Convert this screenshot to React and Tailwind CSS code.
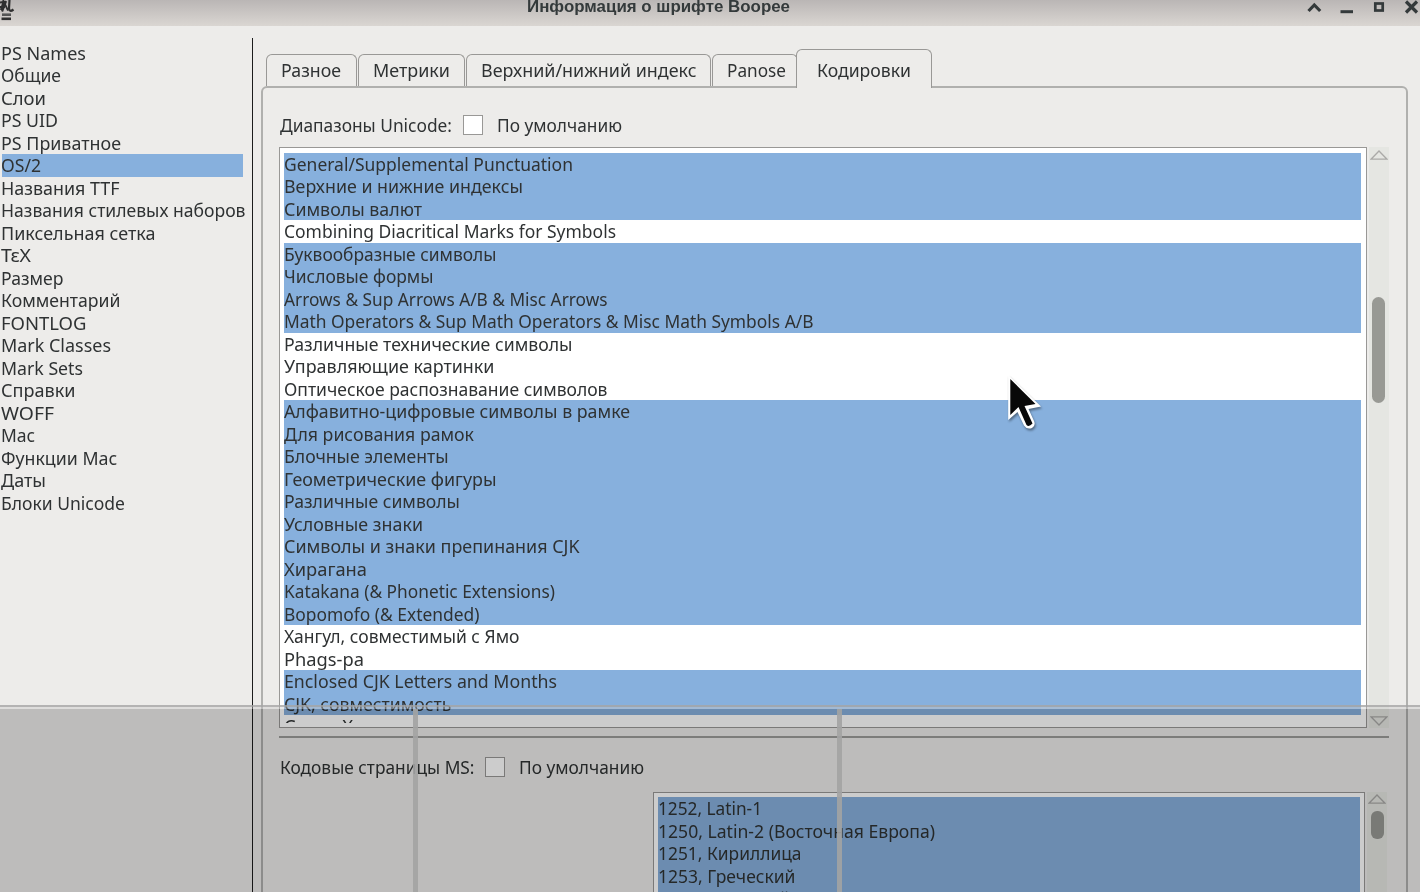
import { useLayoutEffect, useRef } from "react";

// Text run condensed or stretched to an exact advance width.
function Fit({ w, children, className = "" }) {
  const ref = useRef(null);
  useLayoutEffect(() => {
    const el = ref.current;
    const apply = () => {
      el.style.transform = "none";
      const natural = el.getBoundingClientRect().width;
      if (w && natural) el.style.transform = `scaleX(${w / natural})`;
    };
    apply();
    document.fonts?.ready.then(apply);
  }, [w]);
  return (
    <span ref={ref} className={`inline-block origin-left whitespace-nowrap ${className}`}>
      {children}
    </span>
  );
}

const sections = [
  ["PS Names", 85], ["Общие", 60], ["Слои", 45], ["PS UID", 57], ["PS Приватное", 120],
  ["OS/2", 40], ["Названия TTF", 118.5], ["Названия стилевых наборов", 244.5],
  ["Пиксельная сетка", 154.5], ["ΤεΧ", 30], ["Размер", 62.5], ["Комментарий", 119.5],
  ["FONTLOG", 85.5], ["Mark Classes", 110], ["Mark Sets", 82], ["Справки", 74.5],
  ["WOFF", 53], ["Mac", 34], ["Функции Mac", 116], ["Даты", 45], ["Блоки Unicode", 124],
];

const ranges = [
  ["General/Supplemental Punctuation", 289, 1],
  ["Верхние и нижние индексы", 239, 1],
  ["Символы валют", 138, 1],
  ["Combining Diacritical Marks for Symbols", 332, 0],
  ["Буквообразные символы", 212.5, 1],
  ["Числовые формы", 149.5, 1],
  ["Arrows & Sup Arrows A/B & Misc Arrows", 323.5, 1],
  ["Math Operators & Sup Math Operators & Misc Math Symbols A/B", 529.5, 1],
  ["Различные технические символы", 288.5, 0],
  ["Управляющие картинки", 210.5, 0],
  ["Оптическое распознавание символов", 323.5, 0],
  ["Алфавитно-цифровые символы в рамке", 346, 1],
  ["Для рисования рамок", 190, 1],
  ["Блочные элементы", 164.5, 1],
  ["Геометрические фигуры", 212.5, 1],
  ["Различные символы", 176, 1],
  ["Условные знаки", 139, 1],
  ["Символы и знаки препинания CJK", 295.5, 1],
  ["Хирагана", 83, 1],
  ["Katakana (& Phonetic Extensions)", 271, 1],
  ["Bopomofo (& Extended)", 195.5, 1],
  ["Хангул, совместимый с Ямо", 235.5, 0],
  ["Phags-pa", 80, 0],
  ["Enclosed CJK Letters and Months", 273, 1],
  ["CJK, совместимость", 167.5, 1],
  ["Слоги Хангул", 118, 0],
];

const pages = [
  ["1252, Latin-1", 104], ["1250, Latin-2 (Восточная Европа)", 277],
  ["1251, Кириллица", 143.5], ["1253, Греческий", 137.5], ["1254, Турецкий", 132],
];

function Tab({ w, text, children, active }) {
  return (
    <div
      className={
        active
          ? "-mb-[2px] -ml-[2px] h-[39px] w-[136px] rounded-t-[6px] border border-b-0 border-[#999896] bg-[#edecea] pt-[9px] pl-[20px] leading-[23px]"
          : `h-[32px] shrink-0 rounded-t-[6px] border border-b-0 border-[#999896] pt-[4px] pl-[14px] leading-[23px] ${w}`
      }
    >
      <Fit w={text}>{children}</Fit>
    </div>
  );
}

function Arrow({ down }) {
  return (
    <svg width="18" height="10" viewBox="0 0 18 10" className={down ? "rotate-180" : ""}>
      <path d="M1 9.2H17L9 1Z" fill="none" stroke="#abaaa8" strokeWidth="1.3" />
    </svg>
  );
}

function CheckLine({ label, labelW, labelBox }) {
  return (
    <div className="flex h-[22px] items-center leading-[22px]">
      <div className={labelBox}><Fit w={labelW}>{label}</Fit></div>
      <div className="size-[20px] border border-[#999896] bg-white" />
      <div className="pl-[14px]"><Fit w={125}>По умолчанию</Fit></div>
    </div>
  );
}

export default function App() {
  return (
    <div className="relative flex h-[892px] w-[1420px] flex-col overflow-hidden bg-[#edecea] font-['Noto_Sans',sans-serif] text-[18px] text-[#2f3233]">
      <header className="flex h-[26px] shrink-0 items-start justify-between bg-linear-to-b from-[#bab6b5] to-[#dad6d2]">
        <svg width="527" height="24" viewBox="0 0 527 24" fill="none" stroke="#303030">
          <path d="M0 2.500L3.500 2L1 10M6 1L2 11.500M9.500 0L9 8.500Q9.500 12.500 13.500 9.500" strokeWidth="2.200" />
          <path d="M3 0L8 10.500M0 7H5" strokeWidth="1.800" />
          <path d="M2 14.700H11" stroke="#555" strokeWidth="2.600" />
          <path d="M1.500 18.800H11" strokeWidth="2.600" />
        </svg>
        <div className="-mt-[4px] flex-1 text-[16px] leading-[22px] font-bold text-[#343a3b] font-['Liberation_Sans',sans-serif]">
          <Fit w={263}>Информация о шрифте Boopee</Fit>
        </div>
        <svg width="116" height="24" viewBox="0 0 116 24" fill="none" stroke="#343a3b" strokeWidth="3">
          <path d="M4.500 11L10.300 5L16.200 11" strokeWidth="3.200" />
          <path d="M36.500 11.700H49" />
          <rect x="71.300" y="3.500" width="7.400" height="7" strokeWidth="2.700" />
          <path d="M102 1.500L113 12.500M113 1.500L102 12.500" strokeWidth="3.200" />
        </svg>
      </header>

      <div className="flex min-h-0 flex-1">
        <nav className="w-[252px] shrink-0 pt-[15.600px]">
          {sections.map(([name, w], i) => (
            <div key={name} className={`ml-[2px] h-[22.500px] w-[241px] leading-[22.700px] ${i === 5 ? "bg-[#87b0dd]" : ""}`}>
              <Fit w={w} className="-ml-px">{name}</Fit>
            </div>
          ))}
        </nav>
        <div className="mt-[12px] mr-[0.500px] w-px shrink-0 bg-[#1c1c1c]" />

        <main className="flex w-[1147px] flex-col pt-[22px] pl-[7.500px]">
          <div className="relative z-10 flex h-[38px] shrink-0 items-end pl-[5px]">
            <Tab w="w-[91px]" text={60}>Разное</Tab>
            <div className="w-px" />
            <Tab w="w-[107px]" text={77}>Метрики</Tab>
            <div className="w-px" />
            <Tab w="w-[245px]" text={215.5}>Верхний/нижний индекс</Tab>
            <div className="w-px" />
            <Tab w="w-[86px]" text={59}>Panose</Tab>
            <Tab active text={94}>Кодировки</Tab>
          </div>
          <section className="h-[900px] w-[1147px] shrink-0 rounded-t-[6px] border-2 border-[#b0b0ae] pt-[26px] pl-[16px]">
            <CheckLine label="Диапазоны Unicode:" labelW={172} labelBox="w-[183.500px] pl-px" />
            <div className="mt-[11px] flex h-[581px]">
              <div className="h-[581px] w-[1088px] overflow-hidden border-[1.500px] border-[#999896] bg-white py-[4.800px] pr-[5px] pl-[4px]">
                <div className="h-[570px] overflow-hidden">
                  {ranges.map(([name, w, on]) => (
                    <div key={name} className={`h-[22.500px] leading-[23px] ${on ? "bg-[#87b0dd]" : ""}`}>
                      <Fit w={w}>{name}</Fit>
                    </div>
                  ))}
                </div>
              </div>
              <div className="ml-[2px] flex w-[20px] flex-col items-center bg-[#e5e6e2] pt-[3px] pb-[2px]">
                <Arrow />
                <div className="mt-[137px] mr-px h-[106px] w-[13px] rounded-full bg-[#989994]" />
                <div className="flex-1" />
                <Arrow down />
              </div>
            </div>
            <div className="mt-[8px] h-[1.500px] w-[1110px] bg-[#9c9b99]" />
            <div className="mt-[18.500px]">
              <CheckLine label="Кодовые страницы MS:" labelW={194.5} labelBox="w-[206px] pl-px" />
            </div>
            <div className="mt-[14px] ml-[374px] flex h-[200px]">
              <div className="w-[712px] border-[1.500px] border-[#999896] bg-white p-[4px]">
                {pages.map(([name, w]) => (
                  <div key={name} className="h-[22.500px] bg-[#87b0dd] leading-[22.500px]">
                    <Fit w={w}>{name}</Fit>
                  </div>
                ))}
              </div>
              <div className="ml-[2px] flex w-[20px] flex-col items-center bg-[#e5e6e2] pt-[2px]">
                <Arrow />
                <div className="mt-[7px] h-[28px] w-[13px] rounded-[6px] bg-[#989994]" />
              </div>
            </div>
          </section>
        </main>
      </div>

      {/* dimmed snap area */}
      <div className="absolute inset-x-0 top-[705px] z-20 h-[187px]">
        <div className="h-[2px] bg-[#a5a5a5]/80" />
        <div className="h-[2px] bg-[#c9c9c9]/40" />
        <div className="flex h-[183px] bg-black/20 pl-[413px]">
          <div className="w-[5px] bg-[#a3a3a3]/90" />
          <div className="ml-[419px] w-[5px] bg-[#a3a3a3]/90" />
        </div>
      </div>

      {/* pointer */}
      <svg width="44" height="62" viewBox="0 0 44 62" className="absolute top-[372px] left-[1001px] z-30 drop-shadow-[1px_2px_1px_rgba(0,0,0,0.400)]">
        <path d="M7.200 3V48L16.500 40L23 53.500Q26 58 31 56Q35 53.500 33 49L27.500 37L40 34.500Z" fill="#fff" />
        <path d="M9.300 7V43L17.500 35L25.500 53Q28 55.500 31.500 51.500L23.500 34L34.500 32Z" fill="#080808" />
      </svg>
    </div>
  );
}
